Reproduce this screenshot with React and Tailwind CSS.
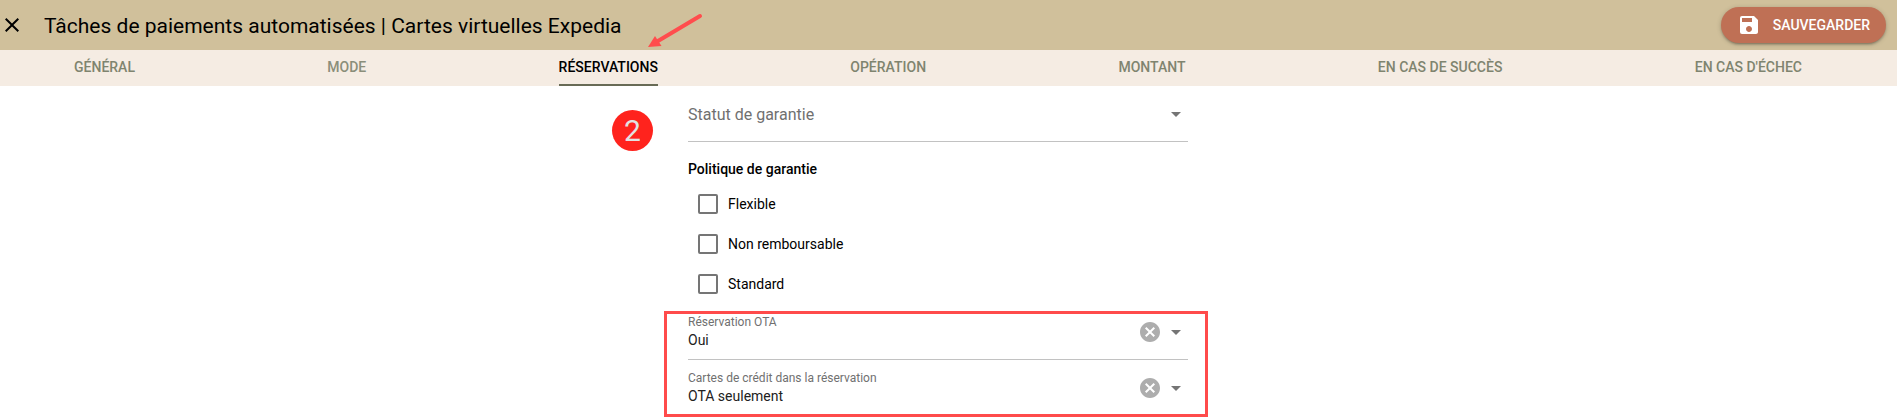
import React, { useState } from 'react';
import clsx from 'clsx';
import { MdArrowDropDown, MdCancel, MdClose, MdSave } from 'react-icons/md';

const tabs = [
    { id: 'general', label: 'Général' },
    { id: 'mode', label: 'Mode' },
    { id: 'reservations', label: 'Réservations' },
    { id: 'operation', label: 'Opération' },
    { id: 'montant', label: 'Montant' },
    { id: 'succes', label: 'En cas de succès' },
    { id: 'echec', label: "En cas d'échec" },
];

const policies = ['Flexible', 'Non remboursable', 'Standard'];

const SelectField = ({ id, label, options, value, onChange }) => (
    <div className="flex h-14 items-center gap-[2px] border-b border-[#c2c2c2]">
        <div className="grid h-full flex-1">
            <label
                htmlFor={id}
                className={clsx(
                    'pointer-events-none col-start-1 row-start-1 text-[#707070]',
                    value ? 'pt-2.5 text-xs leading-4' : 'self-center pt-0.5 text-base leading-6'
                )}
            >
                {label}
            </label>
            <select
                id={id}
                value={value}
                onChange={(e) => onChange(e.target.value)}
                className="col-start-1 row-start-1 w-full appearance-none bg-transparent pt-4 text-sm text-[#212121] outline-none"
            >
                <option value=""></option>
                {options.map((option) => (
                    <option key={option} value={option}>{option}</option>
                ))}
            </select>
        </div>
        {value && (
            <button type="button" aria-label="Effacer" onClick={() => onChange('')} className="text-[#adadad]">
                <MdCancel size={24} />
            </button>
        )}
        <MdArrowDropDown size={24} className="text-[#757575]" />
    </div>
);

const App = () => {
    const [activeTab, setActiveTab] = useState('reservations');
    const [status, setStatus] = useState('');
    const [ota, setOta] = useState('Oui');
    const [cards, setCards] = useState('OTA seulement');

    return (
        <div className="bg-white font-[Roboto,sans-serif] text-black">
            <header className="flex h-[50px] items-center bg-[#d0c09b] pr-[11px]">
                <button type="button" aria-label="Fermer">
                    <MdClose size={24} />
                </button>
                <h1 className="flex-1 pt-0.5 pl-5 text-[21px] leading-8">
                    Tâches de paiements automatisées | Cartes virtuelles Expedia
                </h1>
                <button
                    type="button"
                    className="flex h-9 items-center gap-3 rounded-full bg-[#bf7055] px-4 text-sm font-medium text-white uppercase shadow-[0_1px_5px_rgba(0,0,0,0.2),0_2px_2px_rgba(0,0,0,0.14),0_3px_1px_-2px_rgba(0,0,0,0.12)]"
                >
                    <MdSave size={24} />
                    Sauvegarder
                </button>
            </header>

            <nav className="relative h-9 bg-[#f5ece3] pr-[21px]">
                <div role="tablist" className="flex h-full justify-between px-[74px]">
                    {tabs.map((tab) => (
                        <button
                            key={tab.id}
                            type="button"
                            role="tab"
                            aria-selected={activeTab === tab.id}
                            onClick={() => setActiveTab(tab.id)}
                            className={clsx(
                                'border-b-2 text-sm font-medium uppercase',
                                activeTab === tab.id ? 'border-[#686b56] text-black' : 'border-transparent text-[#7f846f]',
                                tab.id === 'mode' && 'opacity-90'
                            )}
                        >
                            {tab.label}
                        </button>
                    ))}
                </div>
                {/* Flèche vers l'onglet actif */}
                <svg className="absolute top-[-38px] left-[646px]" width="58" height="38" viewBox="0 0 58 38" aria-hidden="true">
                    <path d="M54 4 12 29" stroke="#ff4d4d" strokeWidth="4" strokeLinecap="round" />
                    <path d="M2 35 9 24 15.5 34Z" fill="#ff4d4d" />
                </svg>
            </nav>

            <main className="pr-[21px] pb-0.5">
                <div className="relative mx-auto w-[500px]">
                    <span className="absolute top-6 left-[-76px] flex size-[41px] items-center justify-center rounded-full bg-[#ff231d] text-[30px] text-[#e2e2e2]">
                        2
                    </span>

                    <SelectField
                        id="status"
                        label="Statut de garantie"
                        options={['Garantie', 'Non garantie']}
                        value={status}
                        onChange={setStatus}
                    />

                    <fieldset className="pt-4">
                        <legend className="float-left w-full pb-1 text-sm leading-[22px] font-medium">Politique de garantie</legend>
                        {policies.map((policy) => (
                            <label key={policy} className="flex h-10 w-full items-center gap-2.5 pl-2.5 text-sm">
                                <input
                                    type="checkbox"
                                    className="size-5 appearance-none rounded-[2px] border-2 border-[#757575] checked:bg-[#757575]"
                                />
                                {policy}
                            </label>
                        ))}
                    </fieldset>

                    <div className="relative">
                        <SelectField id="ota" label="Réservation OTA" options={['Oui', 'Non']} value={ota} onChange={setOta} />
                        <SelectField
                            id="cards"
                            label="Cartes de crédit dans la réservation"
                            options={['OTA seulement', 'Toutes']}
                            value={cards}
                            onChange={setCards}
                        />
                        <div className="pointer-events-none absolute top-[7px] right-[-20px] bottom-[-1px] left-[-24px] border-[3px] border-[#ff4b4b]"></div>
                    </div>
                </div>
            </main>
        </div>
    );
};

export default App;
